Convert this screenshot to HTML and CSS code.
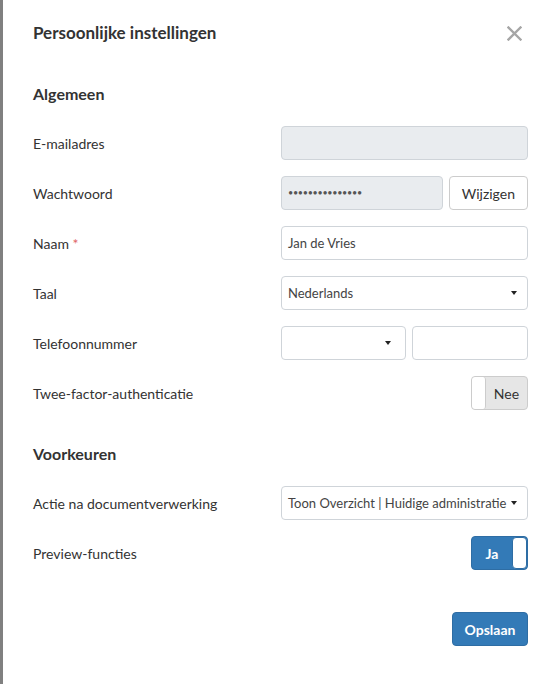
FILE: index.html
```html
<!DOCTYPE html>
<html lang="nl">
<head>
<meta charset="utf-8">
<title>Persoonlijke instellingen</title>
<link rel="stylesheet" href="styles.css">
</head>
<body>
<div class="page">
  <div class="backdrop"></div>
  <div class="modal">
    <div class="modal-header">
      <h1 class="modal-title">Persoonlijke instellingen</h1>
      <button class="close" type="button" aria-label="Sluiten">
        <svg width="15" height="15" viewBox="0 0 15 15"><path d="M1.5 1.5 L13.5 13.5 M13.5 1.5 L1.5 13.5" stroke="#a6a6a6" stroke-width="2.4" stroke-linecap="square" fill="none"/></svg>
      </button>
    </div>

    <h2 class="section-title first">Algemeen</h2>

    <div class="row">
      <label class="label">E-mailadres</label>
      <div class="control"><div class="input readonly"></div></div>
    </div>
    <div class="row">
      <label class="label">Wachtwoord</label>
      <div class="control split">
        <div class="input readonly dots">•••••••••••••••</div>
        <button class="btn btn-default" type="button">Wijzigen</button>
      </div>
    </div>
    <div class="row">
      <label class="label">Naam <span class="req">*</span></label>
      <div class="control"><div class="input">Jan de Vries</div></div>
    </div>
    <div class="row">
      <label class="label">Taal</label>
      <div class="control"><div class="input select">Nederlands<span class="caret"></span></div></div>
    </div>
    <div class="row">
      <label class="label">Telefoonnummer</label>
      <div class="control phone">
        <div class="input select prefix"><span class="caret"></span></div>
        <div class="input number"></div>
      </div>
    </div>
    <div class="row">
      <label class="label">Twee-factor-authenticatie</label>
      <div class="control right">
        <div class="toggle off"><span class="knob"></span><span class="toggle-text">Nee</span></div>
      </div>
    </div>

    <h2 class="section-title">Voorkeuren</h2>

    <div class="row">
      <label class="label">Actie na documentverwerking</label>
      <div class="control"><div class="input select">Toon Overzicht | Huidige administratie<span class="caret"></span></div></div>
    </div>
    <div class="row">
      <label class="label">Preview-functies</label>
      <div class="control right">
        <div class="toggle on"><span class="toggle-text">Ja</span><span class="knob"></span></div>
      </div>
    </div>

    <div class="footer">
      <button class="btn btn-primary" type="button">Opslaan</button>
    </div>
  </div>
</div>
</body>
</html>
```

FILE: styles.css
```css
html, body {
  margin: 0;
  padding: 0;
  background: #ffffff;
}
body {
  font-family: "Lato", "Liberation Sans", sans-serif;
  color: #333333;
}
.page {
  display: flex;
  min-height: 684px;
}
.backdrop {
  flex: 0 0 3px;
  background: #808080;
}
.modal {
  flex: 1;
  padding: 20px 25px 0 30px;
  background: #ffffff;
}
.modal-header {
  display: flex;
  justify-content: space-between;
  align-items: center;
  height: 26px;
}
.modal-title {
  margin: 0;
  font-size: 17px;
  line-height: 26px;
  font-weight: 700;
  color: #333333;
}
.close {
  border: 0;
  background: none;
  padding: 0;
  margin-right: 6px;
  width: 15px;
  height: 15px;
  display: flex;
}
.section-title {
  margin: 33px 0 21px;
  font-size: 16px;
  line-height: 22px;
  font-weight: 700;
  color: #333333;
}
.section-title.first {
  margin-top: 37px;
}
.row {
  display: grid;
  grid-template-columns: 248px 1fr;
  align-items: center;
  height: 34px;
  margin-bottom: 16px;
}
.label {
  font-size: 14px;
  color: #333333;
}
.req {
  color: #e06666;
}
.control {
  display: flex;
  height: 34px;
}
.control.split, .control.phone {
  gap: 6px;
}
.control.right {
  justify-content: flex-end;
}
.input {
  box-sizing: border-box;
  flex: 1;
  height: 34px;
  border: 1px solid #cfd4d9;
  border-radius: 4px;
  background: #ffffff;
  padding: 0 12px 0 6px;
  font-size: 13px;
  line-height: 32px;
  color: #444444;
  display: flex;
  align-items: center;
  white-space: nowrap;
  overflow: hidden;
}
.input.readonly {
  background: #e9ecef;
}
.input.dots {
  font-size: 9px;
  letter-spacing: -0.3px;
  color: #555555;
}
.input.select {
  justify-content: space-between;
  padding-right: 10px;
}
.input.prefix {
  flex: 0 0 125px;
  justify-content: flex-end;
  padding-right: 14px;
}
.caret {
  width: 0;
  height: 0;
  border-left: 3.5px solid transparent;
  border-right: 3.5px solid transparent;
  border-top: 4px solid #222222;
  margin-left: 4px;
}
.btn {
  box-sizing: border-box;
  height: 34px;
  border-radius: 4px;
  font-family: inherit;
  font-size: 14px;
  padding: 0 12px;
  cursor: pointer;
}
.btn-default {
  flex: 0 0 78px;
  background: #ffffff;
  border: 1px solid #cccccc;
  color: #333333;
}
.btn-primary {
  width: 76px;
  background: #337ab7;
  border: 1px solid #2e6da4;
  color: #ffffff;
  font-weight: 700;
  padding: 0;
}
.toggle {
  box-sizing: border-box;
  width: 57px;
  height: 34px;
  border-radius: 4px;
  display: flex;
  align-items: stretch;
  overflow: hidden;
  font-size: 14px;
}
.toggle.off {
  background: #e6e6e6;
  border: 1px solid #cccccc;
  color: #333333;
}
.toggle.on {
  background: #337ab7;
  border: 1px solid #2e6da4;
  color: #ffffff;
  font-weight: 700;
}
.knob {
  flex: 0 0 13px;
  background: #ffffff;
  border-radius: 3px;
}
.toggle.off .knob {
  border-right: 1px solid #cccccc;
}
.toggle.on .knob {
  border: 1px solid #2e6da4;
  border-radius: 4px;
}
.toggle-text {
  flex: 1;
  display: flex;
  align-items: center;
  justify-content: center;
}
.footer {
  display: flex;
  justify-content: flex-end;
  margin-top: 42px;
}
```
